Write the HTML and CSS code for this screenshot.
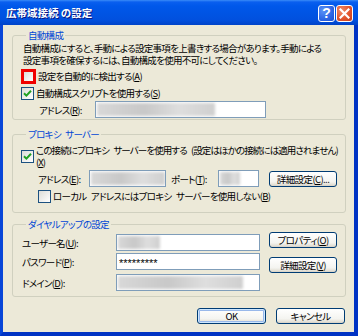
FILE: index.html
```html
<!DOCTYPE html>
<html lang="ja">
<head>
    <meta charset="utf-8">
    <title>広帯域接続 の設定</title>
    <link rel="stylesheet" href="styles.css">
</head>
<body>

<div class="window">
    <div class="titlebar">
        <span class="title">広帯域接続 の設定</span>
        <div class="title-buttons">
            <span class="tbtn help">?</span>
            <span class="tbtn close">
                <svg width="11" height="11" viewBox="0 0 11 11"><path d="M1.5 1.5 L9.5 9.5 M9.5 1.5 L1.5 9.5" stroke="#fff" stroke-width="2.2" stroke-linecap="square"/></svg>
            </span>
        </div>
    </div>

    <div class="frame">
        <!-- 自動構成 -->
        <fieldset class="group group-auto">
            <legend>自動構成</legend>
            <p class="desc">自動構成にすると、手動による設定事項を上書きする場合があります。手動による<br>設定事項を確保するには、自動構成を使用不可にしてください。</p>
            <div class="check row-detect">
                <span class="cb marked"></span>
                <span>設定を自動的に検出する(<u>A</u>)</span>
            </div>
            <div class="check row-script">
                <span class="cb checked"><svg width="9" height="9" viewBox="0 0 9 9"><path d="M1 4.2 L3.4 6.6 L8 1.8" fill="none" stroke="#21a121" stroke-width="2"/></svg></span>
                <span>自動構成スクリプトを使用する(<u>S</u>)</span>
            </div>
            <div class="field row-address">
                <span class="lbl lbl-script">アドレス(<u>R</u>):</span>
                <span class="input input-script"><span class="smudge smudge-script"></span></span>
            </div>
        </fieldset>

        <!-- プロキシ サーバー -->
        <fieldset class="group group-proxy">
            <legend>プロキシ サーバー</legend>
            <div class="check row-proxy">
                <span class="cb checked"><svg width="9" height="9" viewBox="0 0 9 9"><path d="M1 4.2 L3.4 6.6 L8 1.8" fill="none" stroke="#21a121" stroke-width="2"/></svg></span>
                <span class="proxy-text">この接続にプロキシ サーバーを使用する (設定はほかの接続には適用されません)<br>(<u>X</u>)</span>
            </div>
            <div class="field row-proxy-address">
                <span class="lbl lbl-proxy">アドレス(<u>E</u>):</span>
                <span class="input input-proxy"><span class="smudge smudge-proxy"></span></span>
                <span class="lbl lbl-port">ポート(<u>T</u>):</span>
                <span class="input input-port"><span class="smudge smudge-port"></span></span>
                <button class="btn btn-side">詳細設定(<u>C</u>)...</button>
            </div>
            <div class="check row-local">
                <span class="cb"></span>
                <span>ローカル アドレスにはプロキシ サーバーを使用しない(<u>B</u>)</span>
            </div>
        </fieldset>

        <!-- ダイヤルアップの設定 -->
        <fieldset class="group group-dialup">
            <legend>ダイヤルアップの設定</legend>
            <div class="dialup">
                <div class="dialup-fields">
                    <div class="field">
                        <span class="lbl lbl-dial">ユーザー名(<u>U</u>):</span>
                        <span class="input input-dial"><span class="smudge smudge-user"></span></span>
                    </div>
                    <div class="field">
                        <span class="lbl lbl-dial">パスワード(<u>P</u>):</span>
                        <span class="input input-dial"><span class="password">*********</span></span>
                    </div>
                    <div class="field">
                        <span class="lbl lbl-dial">ドメイン(<u>D</u>):</span>
                        <span class="input input-dial"><span class="smudge smudge-domain"></span></span>
                    </div>
                </div>
                <div class="dialup-buttons">
                    <button class="btn btn-side">プロパティ(<u>O</u>)</button>
                    <button class="btn btn-side btn-adv">詳細設定(<u>V</u>)</button>
                </div>
            </div>
        </fieldset>

        <div class="actions">
            <button class="btn btn-action btn-default">OK</button>
            <button class="btn btn-action">キャンセル</button>
        </div>
    </div>
</div>

</body>
</html>
```

FILE: styles.css
```css
body {
    margin: 0;
    background: #ffffff;
    font-family: "Noto Sans CJK JP", "Noto Sans", sans-serif;
    font-size: 9.5px;
    letter-spacing: -0.7px;
    word-spacing: 3px;
    color: #000;
}

u {
    text-decoration: underline;
    text-underline-offset: 1px;
}

.window {
    width: 358px;
    height: 336px;
    display: flex;
    flex-direction: column;
}

/* title bar */
.titlebar {
    height: 25px;
    flex: none;
    display: flex;
    align-items: center;
    justify-content: space-between;
    background: linear-gradient(#3a8cf8 0px, #0a5fef 2px, #0058ea 6px, #0054e3 14px, #0150de 20px, #0043c8 25px);
}

.title {
    margin-left: 6px;
    color: #fff;
    font-weight: bold;
    font-size: 10.5px;
    letter-spacing: 0;
    word-spacing: 0;
    text-shadow: 1px 1px 0 #0a1883;
    font-feature-settings: "palt";
}

.title-buttons {
    display: flex;
    gap: 1px;
    margin-right: 5px;
    margin-top: 1px;
}

.tbtn {
    width: 15px;
    height: 15px;
    border: 1px solid #fff;
    border-radius: 3px;
    display: flex;
    align-items: center;
    justify-content: center;
    color: #fff;
    font-family: "Liberation Sans", sans-serif;
    font-weight: bold;
    font-size: 14px;
    letter-spacing: 0;
}

.help {
    background: radial-gradient(circle at 30% 30%, #5b93f7 0%, #2c66e5 60%, #1b4fd0 100%);
}

.close {
    background: radial-gradient(circle at 30% 30%, #f08c6a 0%, #e2552d 55%, #c63d1b 100%);
}

/* window body */
.frame {
    flex: 1;
    background: #ece9d8;
    border-left: 3px solid #0846d8;
    border-right: 4px solid #0033c4;
    border-bottom: 4px solid #0033c4;
    display: flex;
    flex-direction: column;
}

.group {
    margin: 0 8px 0 9px;
    padding: 0 8px 0 8px;
    border: 1px solid #d0d0bf;
    border-radius: 3px;
    min-width: 0;
}

.group legend {
    margin-left: 5px;
    padding: 0 2px;
    color: #0046d5;
    line-height: 12px;
    font-feature-settings: "palt";
}

.group-auto {
    margin-top: 4px;
    padding-bottom: 1px;
}

.group-proxy {
    margin-top: 8px;
    padding-bottom: 9px;
}

.group-dialup {
    margin-top: 5px;
    padding-bottom: 5px;
}

.desc {
    margin: 1px 0 0 2px;
    line-height: 12px;
    white-space: nowrap;
    font-feature-settings: "palt";
}

.check {
    display: flex;
    align-items: center;
    gap: 2px;
    white-space: nowrap;
    font-feature-settings: "palt";
    line-height: 12px;
}

.row-detect {
    margin-top: 3px;
    height: 14px;
}

.row-script {
    margin-top: 3px;
    height: 14px;
}

.row-proxy {
    margin-top: 4px;
}

.proxy-text {
    line-height: 12px;
    letter-spacing: -0.9px;
}

.row-local {
    margin-top: 2px;
    margin-left: 17px;
    height: 14px;
}

.cb {
    flex: none;
    width: 11px;
    height: 11px;
    border: 1px solid #1c5180;
    background: linear-gradient(135deg, #dcdcd7, #ffffff);
    display: flex;
    align-items: center;
    justify-content: center;
}

.cb.marked {
    width: 9px;
    height: 9px;
    border: 2px solid #f00000;
    box-shadow: 0 0 0 1px #f00000;
    margin-left: 1px;
    margin-right: 1px;
}

.field {
    display: flex;
    align-items: center;
    white-space: nowrap;
    font-feature-settings: "palt";
}

.row-address {
    margin-top: 1px;
}

.lbl {
    flex: none;
}

.lbl-script {
    width: 56px;
    margin-left: 18px;
}

.lbl-proxy {
    width: 51px;
    margin-left: 17px;
}

.lbl-port {
    width: 47px;
    margin-left: 5px;
}

.lbl-dial {
    width: 94px;
    margin-left: 1px;
}

.input {
    flex: none;
    height: 15px;
    border: 1px solid #7f9db9;
    background: #fff;
    display: flex;
    align-items: center;
    overflow: hidden;
}

.input-script {
    width: 169px;
}

.input-proxy {
    width: 75px;
}

.input-port {
    width: 39px;
}

.input-dial {
    width: 142px;
}

.smudge {
    height: 13px;
    margin-left: 1px;
    background: linear-gradient(90deg, #d8d8d8, #c8c8c8 40%, #dedede 70%, #cfcfcf);
    filter: blur(1.5px);
}

.smudge-script {
    width: 118px;
}

.smudge-proxy {
    width: 74px;
}

.smudge-port {
    width: 20px;
}

.smudge-user {
    width: 42px;
}

.smudge-domain {
    width: 125px;
}

.password {
    margin-left: 2px;
    font-family: "Liberation Sans", sans-serif;
    font-size: 11px;
    letter-spacing: 0;
    line-height: 11px;
    padding-top: 3px;
}

.row-proxy-address {
    margin-top: 2px;
}

/* buttons */
.btn {
    font-family: inherit;
    font-size: 9.5px;
    letter-spacing: -0.6px;
    color: #000;
    border: 1px solid #003c74;
    border-radius: 3px;
    background: linear-gradient(#ffffff, #f4f4f0 70%, #e3e0d6 90%, #d6d0c5);
    padding: 0;
    white-space: nowrap;
    font-feature-settings: "palt";
    line-height: 12px;
}

.btn-side {
    width: 68px;
    height: 16px;
    margin-left: 10px;
}

.dialup {
    display: flex;
    margin-top: 2px;
}

.dialup-fields {
    display: flex;
    flex-direction: column;
    gap: 2px;
    margin-top: 2px;
}

.dialup-fields .field:last-child {
    margin-top: 2px;
}

.dialup-buttons {
    display: flex;
    flex-direction: column;
    gap: 9px;
}

.dialup-buttons .btn-side {
    margin-left: 9px;
}

.actions {
    display: flex;
    justify-content: flex-end;
    gap: 10px;
    margin: 11px 9px 0 0;
}

.btn-action {
    width: 69px;
    height: 16px;
}

.btn-default {
    box-shadow: inset 0 0 0 1px #cee7ff, inset 0 0 0 2px #98b8ea;
}
```
